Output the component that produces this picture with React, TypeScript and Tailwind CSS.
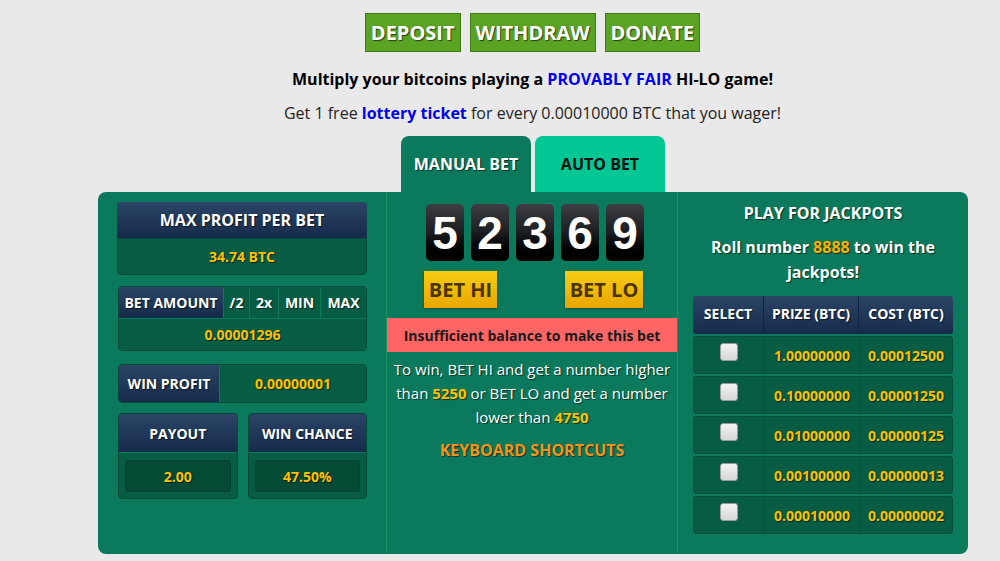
import React from "react";

const font = { fontFamily: '"Open Sans", "Liberation Sans", sans-serif' };
const shadow = "[text-shadow:1px_1px_1px_rgba(0,0,0,0.6)]";

const navy = "bg-gradient-to-b from-[#2b4566] to-[#162b4b]";
const darkBox = "bg-[#075c44] border border-[#054a36]";

function Digit({ n }: { n: string }) {
  return (
    <div className="flex h-[57px] w-[38px] items-center justify-center rounded-[5px] bg-gradient-to-b from-[#3d3f44] via-[#1c1d20] to-[#000000] text-[46px] font-bold leading-none text-white [font-family:'Liberation_Sans',Arial,sans-serif]">
      {n}
    </div>
  );
}

const jackpots = [
  ["1.00000000", "0.00012500"],
  ["0.10000000", "0.00001250"],
  ["0.01000000", "0.00000125"],
  ["0.00100000", "0.00000013"],
  ["0.00010000", "0.00000002"],
];

export default function App() {
  return (
    <div className="min-h-[561px] w-[1000px] bg-[#e9e9e9] pt-[13px]" style={font}>
      <div className="flex justify-center gap-[9px] pl-[65px]">
        {["DEPOSIT", "WITHDRAW", "DONATE"].map((b) => (
          <div
            key={b}
            className={`flex h-[39px] items-center border border-[#3f7a12] bg-[#5ba322] px-[5px] text-[20px] font-bold text-white ${shadow}`}
          >
            {b}
          </div>
        ))}
      </div>
      <p className="mt-[15px] pl-[65px] text-center text-[16px] font-bold text-black">
        Multiply your bitcoins playing a <span className="text-[#0000ee]">PROVABLY FAIR</span> HI-LO game!
      </p>
      <p className="mt-[10px] pl-[65px] text-center text-[16px] text-[#222]">
        Get 1 free <span className="font-bold text-[#0000ee]">lottery ticket</span> for every 0.00010000 BTC that you wager!
      </p>

      <div className="mt-[11px] flex gap-[4px] pl-[401px]">
        <div className={`flex h-[56px] w-[130px] items-center justify-center rounded-t-[8px] bg-[#0b7a5c] text-[16px] font-bold text-white ${shadow}`}>
          MANUAL BET
        </div>
        <div className="flex h-[56px] w-[130px] items-center justify-center rounded-t-[8px] bg-[#00c794] text-[16px] font-bold text-[#111]">
          AUTO BET
        </div>
      </div>

      <div className="ml-[98px] grid h-[362px] w-[870px] grid-cols-[289px_291px_290px] rounded-[8px] bg-[#0b7a5c]">
        {/* left */}
        <div className="flex flex-col border-r border-[#169468] px-[19px] pt-[10px]">
          <div className="overflow-hidden rounded-[4px]">
            <div className={`flex h-[36px] items-center justify-center ${navy} text-[16px] font-bold text-white ${shadow}`}>
              MAX PROFIT PER BET
            </div>
            <div className={`flex h-[37px] items-center justify-center ${darkBox} rounded-b-[4px] text-[14px] font-bold text-[#ffc000] ${shadow}`}>
              34.74 BTC
            </div>
          </div>

          <div className="mt-[11px] ml-px overflow-hidden rounded-[4px] border border-[#054a36]">
            <div className="flex h-[31px] text-[14px] font-bold text-white">
              <div className={`flex w-[104px] items-center justify-center ${navy} ${shadow}`}>BET AMOUNT</div>
              {["/2", "2x", "MIN", "MAX"].map((x, i) => (
                <div
                  key={x}
                  className={`flex items-center justify-center border-l border-[#0a7a58] bg-[#075c44] ${shadow} ${
                    ["w-[26px]", "w-[29px]", "w-[42px]", "flex-1"][i]
                  }`}
                >
                  {x}
                </div>
              ))}
            </div>
            <div className={`flex h-[32px] items-center justify-center border-t border-[#0a7a58] bg-[#075c44] text-[14px] font-bold text-[#ffc000] ${shadow}`}>
              0.00001296
            </div>
          </div>

          <div className="mt-[13px] ml-px flex h-[39px] overflow-hidden rounded-[4px] border border-[#054a36]">
            <div className={`flex w-[100px] items-center justify-center ${navy} text-[14px] font-bold text-white ${shadow}`}>
              WIN PROFIT
            </div>
            <div className={`flex flex-1 items-center justify-center border-l border-[#0a7a58] bg-[#075c44] text-[14px] font-bold text-[#ffc000] ${shadow}`}>
              0.00000001
            </div>
          </div>

          <div className="mt-[10px] ml-px flex gap-[10px]">
            {[
              ["PAYOUT", "2.00"],
              ["WIN CHANCE", "47.50%"],
            ].map(([h, v]) => (
              <div key={h} className="w-[120px] overflow-hidden rounded-[4px] border border-[#054a36] bg-[#075c44]">
                <div className={`flex h-[38px] items-center justify-center ${navy} text-[14px] font-bold text-white ${shadow}`}>
                  {h}
                </div>
                <div className="border-t border-[#0a7a58] px-[6px] pt-[7px] pb-[6px]">
                  <div className={`flex h-[32px] items-center justify-center rounded-[3px] border border-[#03402e] bg-[#044a34] text-[14px] font-bold text-[#ffc000] ${shadow}`}>
                    {v}
                  </div>
                </div>
              </div>
            ))}
          </div>
        </div>

        {/* middle */}
        <div className="flex flex-col items-center border-r border-[#169468] pt-[12px]">
          <div className="ml-[6px] flex gap-[7px]">
            {["5", "2", "3", "6", "9"].map((d, i) => (
              <Digit key={i} n={d} />
            ))}
          </div>
          <div className="mt-[10px] flex w-full justify-between pl-[37px] pr-[34px]">
            <div className="flex h-[37px] w-[73px] items-center justify-center bg-gradient-to-b from-[#f7cd12] to-[#e8a600] text-[20px] font-bold text-[#4a3500] shadow-[0_1px_2px_rgba(0,0,0,0.4)]">
              BET HI
            </div>
            <div className="flex h-[37px] w-[78px] items-center justify-center bg-gradient-to-b from-[#f7cd12] to-[#e8a600] text-[20px] font-bold text-[#4a3500] shadow-[0_1px_2px_rgba(0,0,0,0.4)]">
              BET LO
            </div>
          </div>
          <div className="mt-[10px] flex h-[34px] w-full items-center justify-center bg-[#ff6565] text-[14px] font-bold text-[#1a1a1a]">
            Insufficient balance to make this bet
          </div>
          <p className={`mt-[5px] px-[6px] text-center text-[15px] leading-[24px] text-white ${shadow}`}>
            To win, BET HI and get a number higher than <span className="font-bold text-[#ffc000]">5250</span> or BET LO and get a number lower than{" "}
            <span className="font-bold text-[#ffc000]">4750</span>
          </p>
          <div className={`mt-[9px] text-[16px] font-bold text-[#f7931a] ${shadow}`}>KEYBOARD SHORTCUTS</div>
        </div>

        {/* right */}
        <div className="flex flex-col items-center px-[15px] pt-[10px]">
          <div className={`text-[16px] font-bold leading-[22px] text-white ${shadow}`}>PLAY FOR JACKPOTS</div>
          <p className={`mt-[11px] px-[15px] text-center text-[16px] font-bold leading-[25px] text-white ${shadow}`}>
            Roll number <span className="text-[#ffb000]">8888</span> to win the jackpots!
          </p>
          <div className="mt-[11px] flex w-[260px] flex-col gap-[2px]">
            <div className={`flex h-[38px] rounded-[3px] ${navy} pb-[3px] text-[14px] font-bold text-white ${shadow}`}>
              <div className="flex w-[70px] items-center justify-center">SELECT</div>
              <div className="flex w-[95px] items-center justify-center border-l border-[#0d2340]">PRIZE (BTC)</div>
              <div className="flex flex-1 items-center justify-center border-l border-[#0d2340]">COST (BTC)</div>
            </div>
            {jackpots.map(([p, c]) => (
              <div key={p} className={`flex h-[38px] rounded-[3px] border border-[#05503a] bg-[#075c44] text-[14px] font-bold text-[#ffc000] ${shadow}`}>
                <div className="flex w-[70px] justify-center pt-[6px]">
                  <div className="h-[18px] w-[18px] rounded-[3px] border border-[#9a9a9a] bg-gradient-to-b from-[#f2f2f2] to-[#d8d8d8]" />
                </div>
                <div className="flex w-[95px] items-center justify-center border-l border-[#05503a]">{p}</div>
                <div className="flex flex-1 items-center justify-center border-l border-[#05503a]">{c}</div>
              </div>
            ))}
          </div>
        </div>
      </div>
    </div>
  );
}
